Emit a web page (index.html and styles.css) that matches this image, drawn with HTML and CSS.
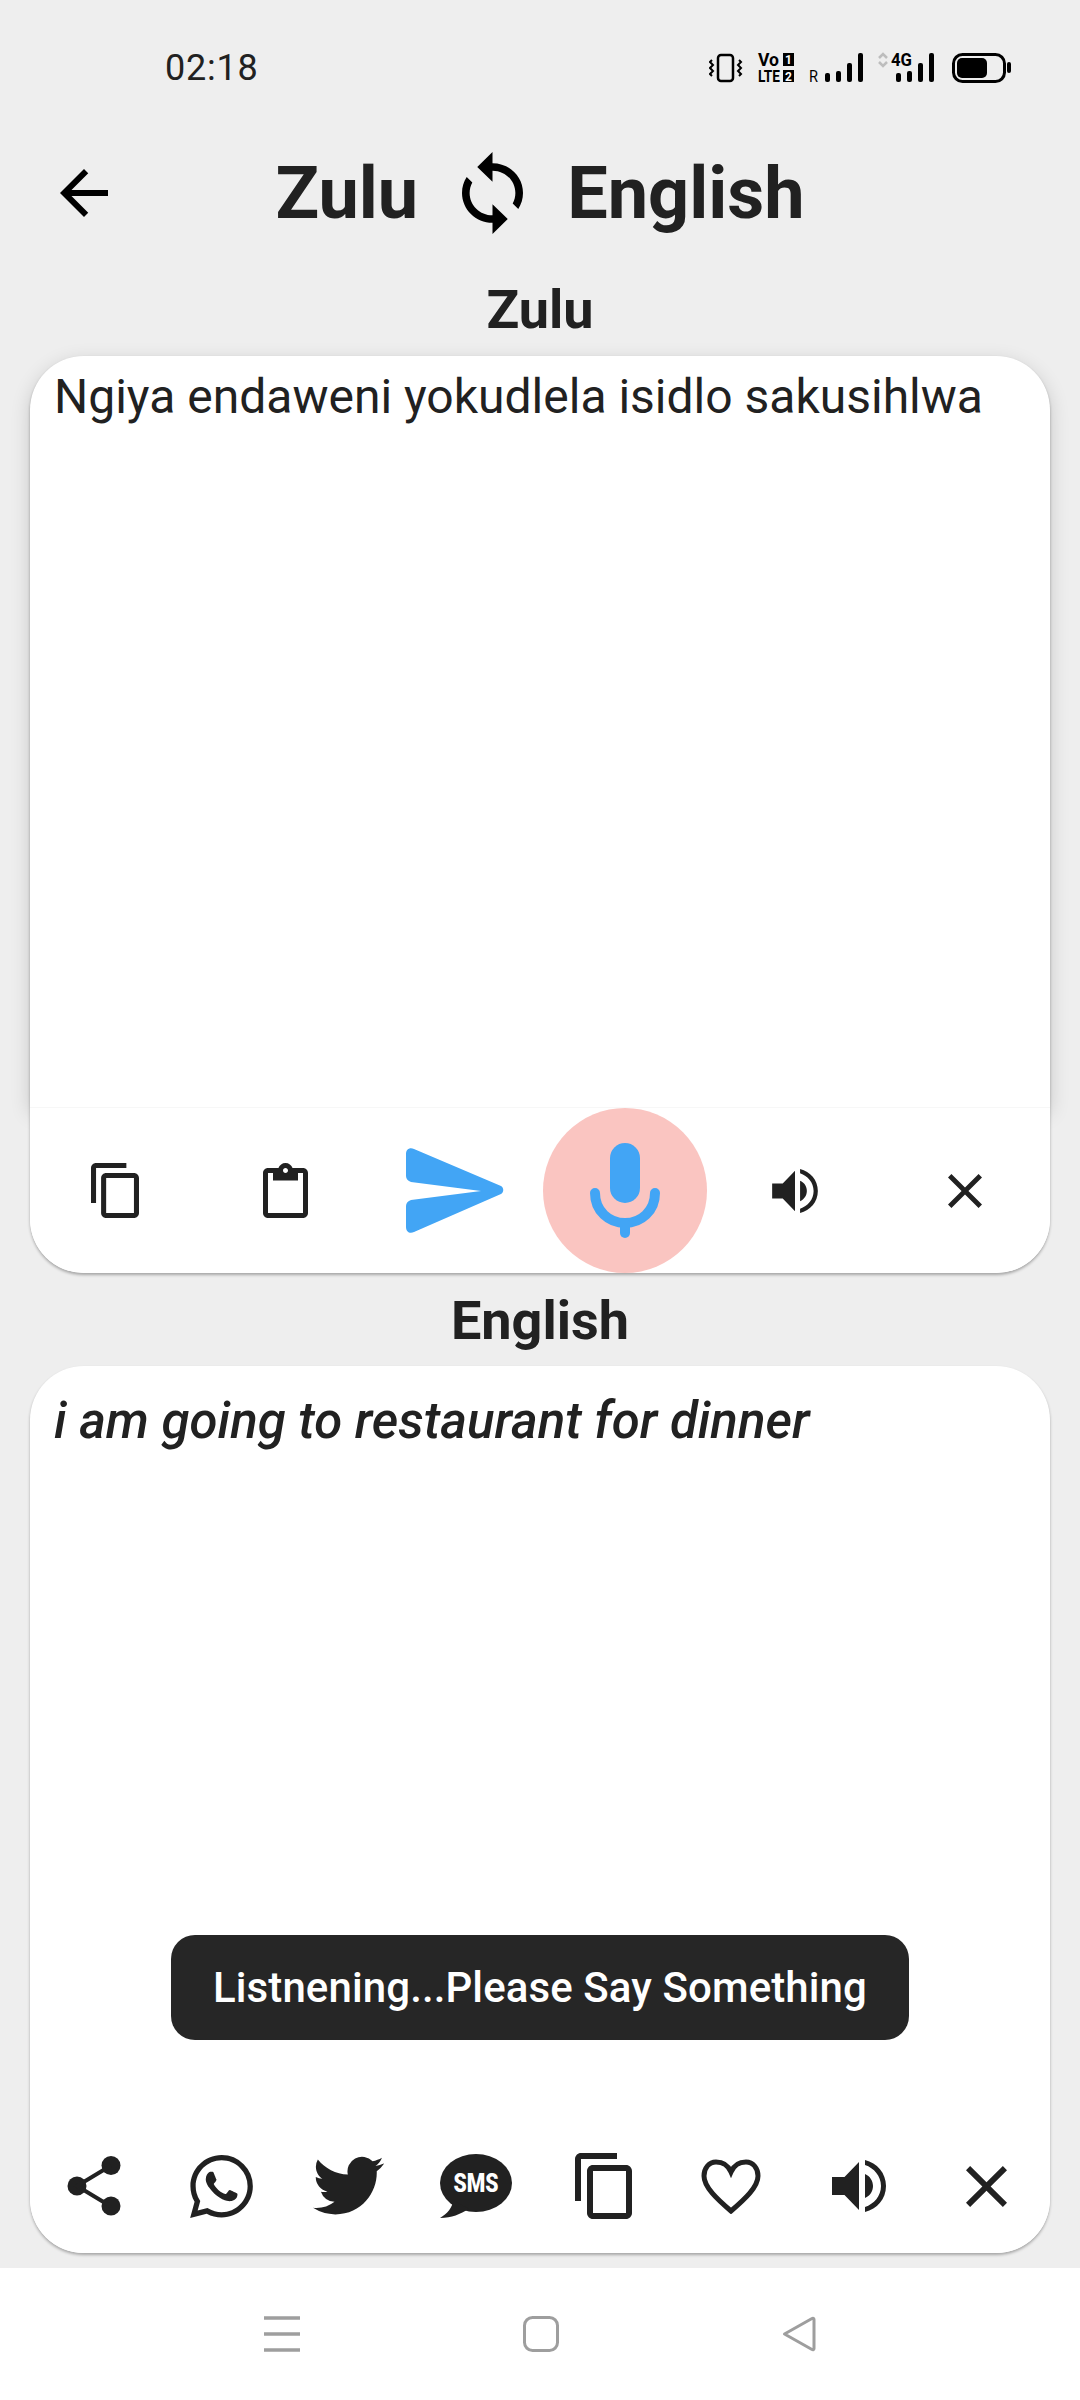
FILE: index.html
```html
<!DOCTYPE html>
<html lang="en">
<head>
    <meta charset="UTF-8">
    <meta name="viewport" content="width=device-width, initial-scale=1.0">
    <title>Zulu English</title>
    <link rel="stylesheet" href="styles.css">
</head>
<body>
    <svg class="defs" width="0" height="0">
        <symbol id="copy" viewBox="2 1 19 22" preserveAspectRatio="none"><path d="M16 1H4c-1.1 0-2 .9-2 2v14h2V3h12V1zm3 4H8c-1.1 0-2 .9-2 2v14c0 1.1.9 2 2 2h11c1.1 0 2-.9 2-2V7c0-1.1-.9-2-2-2zm0 16H8V7h11v14z"/></symbol>
        <symbol id="speaker" viewBox="0 0 54 52"><path d="M0 17h12.5L27 2v48L12.5 35H0zM33 14c5 2 8 7 8 12s-3 10-8 12zM33 0c12 3 21 13 21 26S45 49 33 52v-5c9-3 16-11 16-21S42 8 33 5z"/></symbol>
        <symbol id="close" viewBox="5 5 14 14"><path d="M19 6.41L17.59 5 12 10.59 6.41 5 5 6.41 10.59 12 5 17.59 6.41 19 12 13.41 17.59 19 19 17.59 13.41 12z"/></symbol>
    </svg>

    <div class="status">
        <span class="time">02:18</span>
        <svg class="status-icons" width="303" height="40" viewBox="0 -4 303 40">
            <rect x="9" y="3" width="15" height="26" rx="3" fill="none" stroke="#000" stroke-width="2.5"/>
            <path d="M3 8l-2 2 3 3-3 3 3 3-3 3 2 2M30 8l2 2-3 3 3 3-3 3 3 3-2 2" fill="none" stroke="#000" stroke-width="2"/>
            <text class="st" x="49" y="14" textLength="21" lengthAdjust="spacingAndGlyphs">Vo</text>
            <text class="st-small" x="49" y="30" textLength="22" lengthAdjust="spacingAndGlyphs">LTE</text>
            <rect x="74" y="1" width="11" height="13" fill="#000"/>
            <text class="st-in" x="79.5" y="12">1</text>
            <rect x="74" y="18" width="11" height="12" fill="#000"/>
            <text class="st-in" x="79.5" y="28.500">2</text>
            <text class="st-r" x="100" y="30" textLength="9" lengthAdjust="spacingAndGlyphs">R</text>
            <g fill="#000">
                <rect x="116" y="21" width="5" height="9" rx="2"/>
                <rect x="127" y="19" width="5" height="11" rx="2"/>
                <rect x="138" y="11" width="5" height="19" rx="2"/>
                <rect x="149" y="1" width="5" height="29" rx="2"/>
                <rect x="187" y="21" width="5" height="9" rx="2"/>
                <rect x="198" y="19" width="5" height="11" rx="2"/>
                <rect x="209" y="11" width="5" height="19" rx="2"/>
                <rect x="220" y="1" width="5" height="29" rx="2"/>
            </g>
            <path d="M170 6l4-4 4 4M170 10l4 4 4-4" fill="none" stroke="#bdbdbd" stroke-width="2.5"/>
            <text class="st" x="182" y="14" textLength="21" lengthAdjust="spacingAndGlyphs">4G</text>
            <rect x="244.500" y="2.500" width="51" height="27" rx="9" fill="none" stroke="#000" stroke-width="3"/>
            <rect x="248" y="6" width="30" height="20" rx="5" fill="#000"/>
            <rect x="298" y="10" width="4" height="11" rx="2" fill="#000"/>
        </svg>
    </div>

    <div class="appbar">
        <svg class="back" width="48" height="48" viewBox="4 4 16 16"><path d="M20 11H7.83l5.59-5.59L12 4l-8 8 8 8 1.41-1.41L7.83 13H20v-2z"/></svg>
        <div class="title">
            <span>Zulu</span>
            <svg width="61" height="82" viewBox="4 1 16 22" preserveAspectRatio="none"><path d="M12 4V1L8 5l4 4V6c3.31 0 6 2.69 6 6 0 1.01-.25 1.97-.7 2.8l1.46 1.46C19.54 15.03 20 13.57 20 12c0-4.42-3.58-8-8-8zm0 14c-3.31 0-6-2.69-6-6 0-1.01.25-1.97.7-2.8L5.24 7.74C4.46 8.97 4 10.43 4 12c0 4.42 3.58 8 8 8v3l4-4-4-4v3z"/></svg>
            <span>English</span>
        </div>
    </div>

    <div class="label">Zulu</div>
    <div class="card card-source">
        <div class="text-area">Ngiya endaweni yokudlela isidlo sakusihlwa</div>
        <div class="tools tools-six">
            <svg class="ic" width="48" height="55"><use href="#copy"/></svg>
            <svg class="ic" width="45" height="55" viewBox="3 0 18 22"><path d="M19 2h-4.180C14.400.84 13.300 0 12 0c-1.300 0-2.400.84-2.820 2H5c-1.100 0-2 .9-2 2v16c0 1.100.9 2 2 2h14c1.100 0 2-.9 2-2V4c0-1.100-.9-2-2-2zm-7 0c.55 0 1 .45 1 1s-.45 1-1 1-1-.45-1-1 .45-1 1-1zm7 18H5V4h2v3h10V4h2v16z"/></svg>
            <svg class="ic-blue" width="98" height="86" viewBox="0 0 98 86"><path d="M0 6C0 1 4-1 8 1l87 37c3 2 3 6 0 8L8 84c-4 2-8 0-8-5V58c0-3 2-5 5-6l70-9-70-9c-3-1-5-3-5-6z"/></svg>
            <div class="mic">
                <svg width="70" height="96" viewBox="0 0 70 96">
                    <rect x="20" y="0" width="30" height="60" rx="15" fill="#42a5f5"/>
                    <path d="M5 50c0 18 14 30 30 30s30-12 30-30" fill="none" stroke="#42a5f5" stroke-width="10" stroke-linecap="round"/>
                    <path d="M35 80v10" fill="none" stroke="#42a5f5" stroke-width="10" stroke-linecap="round"/>
                </svg>
            </div>
            <svg class="ic" width="46" height="44"><use href="#speaker"/></svg>
            <svg class="ic" width="34" height="34"><use href="#close"/></svg>
        </div>
    </div>

    <div class="label label-second">English</div>
    <div class="card card-result">
        <div class="text-area result-text">i am going to restaurant for dinner</div>
        <div class="tools tools-eight">
            <svg class="ic" width="54" height="60" viewBox="0 0 54 60">
                <circle cx="10" cy="30" r="9.500"/>
                <circle cx="44" cy="9.500" r="9.500"/>
                <circle cx="44" cy="50" r="9.500"/>
                <path d="M44 9.500L10 30l34 20.500" fill="none" stroke="#212121" stroke-width="4"/>
            </svg>
            <svg class="ic" width="63" height="63" viewBox="0 0 24 24"><path d="M17.472 14.382c-.297-.149-1.758-.867-2.030-.967-.273-.099-.471-.148-.67.150-.197.297-.767.966-.94 1.164-.173.199-.347.223-.644.075-.297-.150-1.255-.463-2.390-1.475-.883-.788-1.480-1.761-1.653-2.059-.173-.297-.018-.458.130-.606.134-.133.298-.347.446-.520.149-.174.198-.298.298-.497.099-.198.050-.371-.025-.520-.075-.149-.669-1.612-.916-2.207-.242-.579-.487-.500-.669-.510-.173-.008-.371-.010-.570-.010-.198 0-.520.074-.792.372-.272.297-1.040 1.016-1.040 2.479 0 1.462 1.065 2.875 1.213 3.074.149.198 2.096 3.200 5.077 4.487.709.306 1.262.489 1.694.625.712.227 1.360.195 1.871.118.571-.085 1.758-.719 2.006-1.413.248-.694.248-1.289.173-1.413-.074-.124-.272-.198-.570-.347m-5.421 7.403h-.004a9.870 9.870 0 01-5.031-1.378l-.361-.214-3.741.982.998-3.648-.235-.374a9.860 9.860 0 01-1.510-5.260c.001-5.450 4.436-9.884 9.888-9.884 2.640 0 5.122 1.030 6.988 2.898a9.825 9.825 0 012.893 6.994c-.003 5.450-4.437 9.884-9.885 9.884m8.413-18.297A11.815 11.815 0 0012.050 0C5.495 0 .16 5.335.157 11.892c0 2.096.547 4.142 1.588 5.945L.057 24l6.305-1.654a11.882 11.882 0 005.683 1.448h.005c6.554 0 11.890-5.335 11.893-11.893a11.821 11.821 0 00-3.480-8.413z"/></svg>
            <svg class="ic" width="71" height="60" viewBox="0 0 24 20.300" preserveAspectRatio="none"><path d="M23.953 2.570a10 10 0 01-2.825.775 4.958 4.958 0 002.163-2.723c-.951.555-2.005.959-3.127 1.184a4.920 4.920 0 00-8.384 4.482C7.690 6.095 4.067 4.130 1.640 1.162a4.822 4.822 0 00-.666 2.475c0 1.710.870 3.213 2.188 4.096a4.904 4.904 0 01-2.228-.616v.060a4.923 4.923 0 003.946 4.827 4.996 4.996 0 01-2.212.085 4.936 4.936 0 004.604 3.417 9.867 9.867 0 01-6.102 2.105c-.390 0-.779-.023-1.170-.067a13.995 13.995 0 007.557 2.209c9.053 0 13.998-7.496 13.998-13.985 0-.210 0-.420-.015-.630A9.935 9.935 0 0024 2.590z"/></svg>
            <svg class="ic" width="72" height="64" viewBox="0 0 72 64">
                <ellipse cx="36" cy="29" rx="36" ry="29"/>
                <path d="M13 46c0 7-6 14-13 18 12 0 20-4 29-9z"/>
                <text class="sms" x="36" y="38" textLength="45" lengthAdjust="spacingAndGlyphs">SMS</text>
            </svg>
            <svg class="ic" width="57" height="66"><use href="#copy"/></svg>
            <svg class="ic" width="60" height="55" viewBox="0 0 60 55"><path d="M30 13c-3-7-9-10-15-10C8 3 3 9 3 17c0 11 13 23 27 35 14-12 27-24 27-35 0-8-5-14-12-14-6 0-12 3-15 10z" fill="none" stroke="#212121" stroke-width="5"/></svg>
            <svg class="ic" width="54" height="52"><use href="#speaker"/></svg>
            <svg class="ic" width="41" height="41"><use href="#close"/></svg>
        </div>
        <div class="toast">Listnening...Please Say Something</div>
    </div>

    <div class="nav">
        <svg width="36" height="36" viewBox="0 0 36 36"><path d="M0 2h36M0 18h36M0 34h36" stroke="#9e9e9e" stroke-width="3.500"/></svg>
        <svg width="36" height="36" viewBox="0 0 36 36"><rect x="1.500" y="1.500" width="33" height="33" rx="8" fill="none" stroke="#9e9e9e" stroke-width="3"/></svg>
        <svg width="34" height="36" viewBox="0 0 34 36"><path d="M2.500 18L30 2.500c1-.5 2 0 2 1v29c0 1-1 1.500-2 1z" fill="none" stroke="#9e9e9e" stroke-width="3" stroke-linejoin="round"/></svg>
    </div>
</body>
</html>
```

FILE: styles.css
```css
* {
    box-sizing: border-box;
}

body {
    margin: 0;
    width: 1080px;
    height: 2400px;
    display: flex;
    flex-direction: column;
    overflow: hidden;
    background: #eeeeee;
    color: #212121;
    font-family: Roboto, "Noto Sans", sans-serif;
}

.defs {
    position: absolute;
}

.status {
    height: 88px;
    padding: 48px 68px 0 165px;
    display: flex;
    justify-content: space-between;
    align-items: center;
}

.time {
    font-size: 36px;
    letter-spacing: 0.8px;
}

.st, .st-small, .st-r {
    font-family: "Roboto", sans-serif;
    font-weight: 700;
    font-size: 18px;
}

.st-small {
    font-size: 16px;
}

.st-r {
    font-weight: 400;
    font-size: 17px;
}

.st-in {
    font-family: "Roboto", sans-serif;
    font-weight: 700;
    font-size: 12px;
    fill: #ffffff;
    text-anchor: middle;
}

.appbar {
    height: 166px;
    margin-top: 22px;
    display: grid;
    grid-template-columns: 1fr auto 1fr;
    align-items: center;
}

.back {
    margin-left: 60px;
}

.title {
    grid-column: 2;
    display: flex;
    align-items: center;
    gap: 44px;
    font-size: 72px;
    font-weight: 700;
}

.label {
    height: 68px;
    line-height: 68px;
    margin-bottom: 12px;
    text-align: center;
    font-size: 54px;
    font-weight: 700;
}

.label-second {
    margin-top: 14px;
    margin-bottom: 11px;
}

.card {
    position: relative;
    margin: 0 30px;
    display: flex;
    flex-direction: column;
    background: #ffffff;
    border-radius: 54px;
    box-shadow: 0 2px 3px rgba(0, 0, 0, 0.3);
}

.card-source {
    height: 917px;
}

.card-result {
    height: 887px;
}

.text-area {
    flex: 1;
    padding: 12px 24px;
    font-size: 48px;
}

.card-source .text-area {
    border-radius: 54px 54px 0 0;
    box-shadow: 0 6px 20px rgba(0, 0, 0, 0.16);
}

.result-text {
    padding-top: 25px;
    font-size: 51px;
    font-style: italic;
    font-weight: 500;
}

.tools {
    position: relative;
    display: grid;
    align-items: center;
    justify-items: center;
    background: #ffffff;
    border-radius: 0 0 54px 54px;
}

.tools-six {
    height: 166px;
    border-top: 1px solid #f7f7f7;
    grid-template-columns: repeat(6, 1fr);
}

.tools-eight {
    height: 134px;
    grid-template-columns: repeat(8, 1fr);
}

.ic {
    fill: #212121;
}

.ic-blue {
    fill: #42a5f5;
}

.sms {
    font-family: "Roboto", sans-serif;
    font-weight: 900;
    font-size: 25px;
    fill: #ffffff;
    text-anchor: middle;
}

.mic {
    width: 164px;
    height: 165px;
    display: flex;
    justify-content: center;
    align-items: center;
    border-radius: 50%;
    background: #fac5c1;
}

.toast {
    position: absolute;
    left: 141px;
    top: 569px;
    width: 738px;
    height: 105px;
    display: flex;
    justify-content: center;
    align-items: center;
    border-radius: 24px;
    background: #262626;
    color: #ffffff;
    font-size: 42px;
    font-weight: 500;
    letter-spacing: 0.1px;
}

.nav {
    margin-top: auto;
    height: 132px;
    padding-left: 264px;
    display: flex;
    align-items: center;
    gap: 223px;
    background: #ffffff;
}
```
